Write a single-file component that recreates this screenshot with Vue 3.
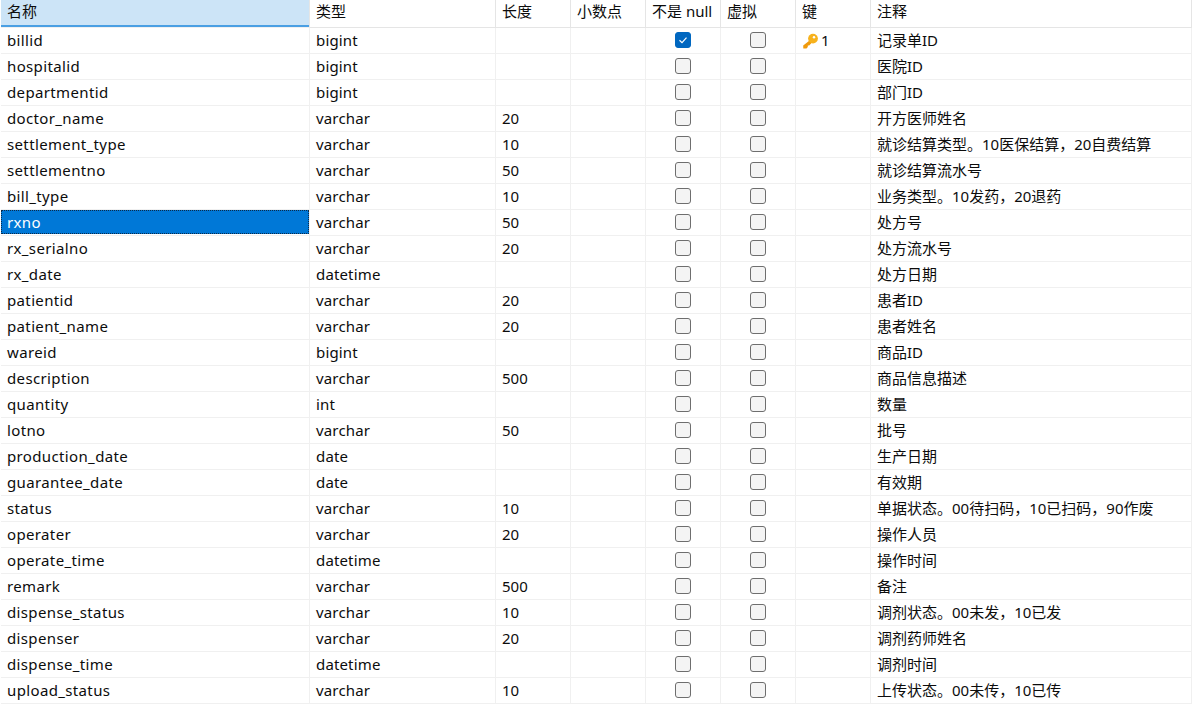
<script setup>
const cols = ['名称', '类型', '长度', '小数点', '不是 null', '虚拟', '键', '注释']
const rows = [
  ['billid', 'bigint', '', '记录单ID'],
  ['hospitalid', 'bigint', '', '医院ID'],
  ['departmentid', 'bigint', '', '部门ID'],
  ['doctor_name', 'varchar', '20', '开方医师姓名'],
  ['settlement_type', 'varchar', '10', '就诊结算类型。10医保结算，20自费结算'],
  ['settlementno', 'varchar', '50', '就诊结算流水号'],
  ['bill_type', 'varchar', '10', '业务类型。10发药，20退药'],
  ['rxno', 'varchar', '50', '处方号'],
  ['rx_serialno', 'varchar', '20', '处方流水号'],
  ['rx_date', 'datetime', '', '处方日期'],
  ['patientid', 'varchar', '20', '患者ID'],
  ['patient_name', 'varchar', '20', '患者姓名'],
  ['wareid', 'bigint', '', '商品ID'],
  ['description', 'varchar', '500', '商品信息描述'],
  ['quantity', 'int', '', '数量'],
  ['lotno', 'varchar', '50', '批号'],
  ['production_date', 'date', '', '生产日期'],
  ['guarantee_date', 'date', '', '有效期'],
  ['status', 'varchar', '10', '单据状态。00待扫码，10已扫码，90作废'],
  ['operater', 'varchar', '20', '操作人员'],
  ['operate_time', 'datetime', '', '操作时间'],
  ['remark', 'varchar', '500', '备注'],
  ['dispense_status', 'varchar', '10', '调剂状态。00未发，10已发'],
  ['dispenser', 'varchar', '20', '调剂药师姓名'],
  ['dispense_time', 'datetime', '', '调剂时间'],
  ['upload_status', 'varchar', '10', '上传状态。00未传，10已传'],
]
</script>

<template>
  <div class="grid">
    <div class="head">
      <div v-for="(c, i) in cols" :key="c" class="hc" :class="{ sorted: i === 0 }">{{ c }}</div>
    </div>
    <div v-for="(r, i) in rows" :key="r[0]" class="row">
      <div class="c namecell"><span class="name" :class="{ sel: r[0] === 'rxno' }">{{ r[0] }}</span></div>
      <div class="c type">{{ r[1] }}</div>
      <div class="c">{{ r[2] }}</div>
      <div class="c"></div>
      <div class="c mid"><span class="box" :class="{ on: i === 0 }">
        <svg v-if="i === 0" viewBox="0 0 16 16" width="16" height="16"><path d="M4.5 8.3 7 10.6 11.5 5.6" fill="none" stroke="#fff" stroke-width="1.2"/></svg>
      </span></div>
      <div class="c mid"><span class="box"></span></div>
      <div class="c">
        <span v-if="i === 0" class="key">
          <svg viewBox="0 0 16 16" width="16" height="16">
            <path d="M8.2 7 1.2 12.6 1.3 15.4 4.5 15.4 5.8 13.9 5.8 12.4 7.2 12.4 10 9.4Z" fill="#f09a0c"/>
            <circle cx="11" cy="5.6" r="4.9" fill="#f7b21d"/>
            <circle cx="12" cy="4.2" r="1.2" fill="#fff"/>
          </svg>
          <span>1</span>
        </span>
      </div>
      <div class="c">{{ r[3] }}</div>
    </div>
  </div>
</template>

<style>
html, body { background: #fff; }
</style>
<style scoped>
.grid {
  width: 1192px;
  height: 708px;
  overflow: hidden;
  font-family: "Noto Sans", "Noto Sans CJK SC", sans-serif;
  font-size: 15px;
  color: #0c0c0c;
  padding-left: 1px;
  box-sizing: border-box;
}
.head, .row {
  display: grid;
  grid-template-columns: 309px 186px 75px 75px 75px 75px 75px 1fr;
}
.head { height: 28px; }
.hc {
  box-sizing: border-box;
  height: 28px;
  padding: 0 6px;
  line-height: 22px;
  border-right: 1px solid #e5e5e5;
  border-bottom: 1px solid #e5e5e5;
}
.sorted {
  background: #cce4f7;
  box-shadow: inset 0 -2px 0 #4a9fe3;
  border-bottom-color: #f0f0f0;
}
.row { height: 26px; }
.c {
  box-sizing: border-box;
  height: 26px;
  padding: 0 6px;
  line-height: 25px;
  border-right: 1px solid #f0f0f0;
  border-bottom: 1px solid #f0f0f0;
  white-space: nowrap;
}
.namecell { padding: 0; }
.type { letter-spacing: 0.15px; }
.name {
  display: block;
  height: 24px;
  padding: 0 6px;
  letter-spacing: 0.36px;
}
.name.sel {
  background: #0078d7;
  color: #fff;
  outline: 1px dotted #0b2a4a;
  outline-offset: -1px;
}
.mid { display: flex; align-items: flex-start; justify-content: center; padding: 4px 0 0; }
.box {
  box-sizing: border-box;
  width: 16px;
  height: 16px;
  border: 1px solid #6e6e6e;
  border-radius: 3px;
  background: #f4f4f4;
  display: block;
}
.box.on {
  background: #0067c0;
  border-color: #0067c0;
}
.box.on svg { display: block; margin: -1px; }
.key { display: flex; align-items: center; gap: 3px; height: 25px; }
</style>
